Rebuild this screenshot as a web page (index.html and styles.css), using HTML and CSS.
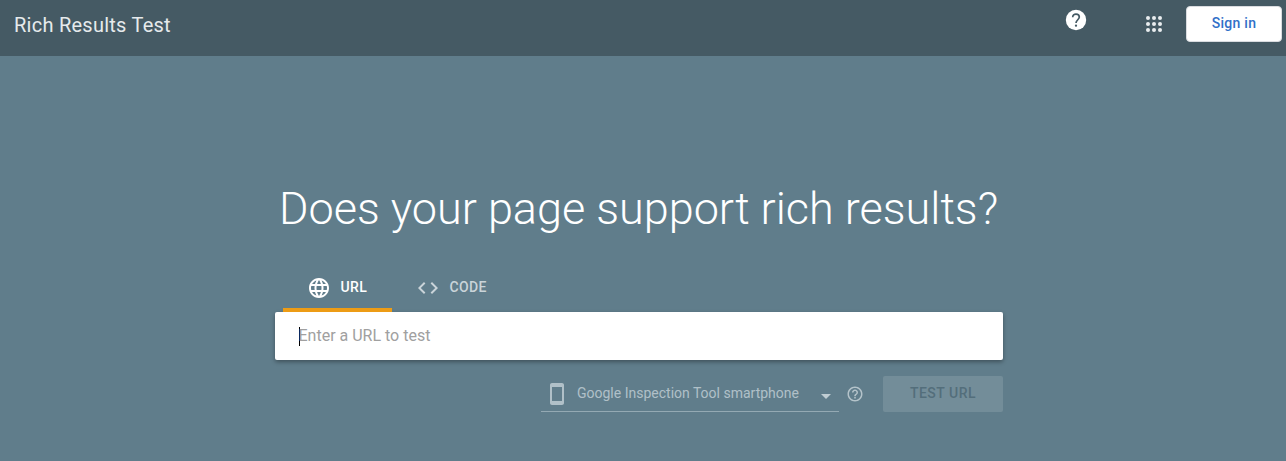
FILE: index.html
```html
<!DOCTYPE html>
<html lang="en">
<head>
<meta charset="utf-8">
<title>Rich Results Test</title>
<link rel="stylesheet" href="styles.css">
</head>
<body>
<header class="topbar">
  <div class="brand">Rich Results Test</div>
  <svg class="icon help" viewBox="0 0 24 24"><circle cx="12" cy="12" r="10.200"/><path class="help-mark" d="M8.700 9.300C8.700 7.300 10.100 6.100 12 6.100s3.300 1.200 3.300 3c0 2.500-3.300 2.900-3.300 6"/><circle class="help-dot" cx="12" cy="17.700" r="1.150"/></svg>
  <svg class="icon apps" viewBox="0 0 24 24"><circle cx="6" cy="6" r="2"/><circle cx="12" cy="6" r="2"/><circle cx="18" cy="6" r="2"/><circle cx="6" cy="12" r="2"/><circle cx="12" cy="12" r="2"/><circle cx="18" cy="12" r="2"/><circle cx="6" cy="18" r="2"/><circle cx="12" cy="18" r="2"/><circle cx="18" cy="18" r="2"/></svg>
  <button class="sign-in">Sign in</button>
</header>
<main class="hero">
  <h1 class="headline">Does your page support rich results?</h1>
  <nav class="tabs">
    <div class="tab tab-active">
      <svg class="icon" viewBox="0 0 24 24"><path d="M11.990 2C6.470 2 2 6.480 2 12s4.470 10 9.990 10C17.520 22 22 17.520 22 12S17.520 2 11.990 2zm6.930 6h-2.950c-.32-1.250-.78-2.450-1.380-3.560 1.840.63 3.370 1.910 4.330 3.560zM12 4.040c.83 1.200 1.480 2.530 1.910 3.960h-3.820c.43-1.430 1.080-2.760 1.910-3.960zM4.260 14C4.100 13.360 4 12.690 4 12s.1-1.360.26-2h3.380c-.08.66-.14 1.320-.14 2s.06 1.340.14 2H4.260zm.82 2h2.950c.32 1.250.78 2.450 1.380 3.560-1.840-.63-3.370-1.900-4.330-3.560zm2.950-8H5.080c.96-1.660 2.490-2.930 4.330-3.560C8.810 5.550 8.350 6.750 8.030 8zM12 19.960c-.83-1.200-1.480-2.530-1.910-3.960h3.820c-.43 1.430-1.080 2.760-1.910 3.960zM14.340 14H9.660c-.09-.66-.16-1.320-.16-2s.07-1.350.16-2h4.680c.09.65.16 1.320.16 2s-.07 1.340-.16 2zm.25 5.560c.6-1.110 1.060-2.310 1.380-3.560h2.950c-.96 1.650-2.490 2.930-4.330 3.560zM16.360 14c.08-.66.14-1.320.14-2s-.06-1.340-.14-2h3.380c.16.64.26 1.310.26 2s-.1 1.360-.26 2h-3.380z"/></svg>
      <span>URL</span>
    </div>
    <div class="tab">
      <svg class="icon" viewBox="0 0 24 24"><path d="M9.400 16.600L4.800 12l4.600-4.600L8 6l-6 6 6 6 1.400-1.400zm5.200 0l4.600-4.600-4.600-4.600L16 6l6 6-6 6-1.400-1.400z"/></svg>
      <span>CODE</span>
    </div>
  </nav>
  <div class="field"><span class="caret"></span><span class="placeholder">Enter a URL to test</span></div>
  <div class="actions">
    <div class="select">
      <svg class="icon phone" viewBox="0 0 24 24"><path d="M17 1.010L7 1c-1.100 0-2 .9-2 2v18c0 1.100.9 2 2 2h10c1.100 0 2-.9 2-2V3c0-1.100-.9-1.990-2-1.990zM17 19H7V5h10v14z"/></svg>
      <span class="agent">Google Inspection Tool smartphone</span>
      <span class="arrow"></span>
    </div>
    <svg class="hint" viewBox="0 0 24 24"><path d="M11 18h2v-2h-2v2zm1-16C6.480 2 2 6.480 2 12s4.480 10 10 10 10-4.480 10-10S17.520 2 12 2zm0 18c-4.410 0-8-3.590-8-8s3.590-8 8-8 8 3.590 8 8-3.590 8-8 8zm0-14c-2.210 0-4 1.790-4 4h2c0-1.100.9-2 2-2s2 .9 2 2c0 2-3 1.750-3 5h2c0-2.250 3-2.500 3-5 0-2.210-1.790-4-4-4z"/></svg>
    <button class="test" disabled>TEST URL</button>
  </div>
</main>
</body>
</html>
```
FILE: styles.css
```css
* { box-sizing: border-box; }
body {
  margin: 0;
  height: 461px;
  overflow: hidden;
  background: #607d8b;
  font-family: Roboto, "Liberation Sans", sans-serif;
}
.icon { width: 24px; height: 24px; fill: currentColor; flex: none; }
.topbar {
  display: flex;
  align-items: flex-start;
  height: 56px;
  padding: 6px 4px 0 14px;
  background: #455a64;
  color: #fff;
}
.brand {
  flex: 1;
  padding-top: 7px;
  font-size: 20px;
  line-height: 24px;
  letter-spacing: 0.25px;
  color: #e6eaec;
}
.help { margin: 2px 54px 0 0; }
.help-mark { fill: none; stroke: #455a64; stroke-width: 1.7; }
.help-dot { fill: #455a64; }
.apps { margin: 6px 20px 0 0; color: #e9edef; }
.sign-in {
  width: 96px;
  height: 36px;
  padding: 0 0 2px;
  border: 1px solid #dadce0;
  border-radius: 4px;
  background: #fff;
  color: #3170c8;
  font: 500 14px Roboto, sans-serif;
  letter-spacing: 0.25px;
}
.hero { width: 728px; margin-left: 275px; padding-top: 123px; }
.headline {
  margin: 0 0 0 4px;
  height: 85px;
  font-size: 45px;
  font-weight: 300;
  line-height: 60px;
  white-space: nowrap;
  color: #fff;
}
.tabs { display: flex; height: 48px; padding-left: 8px; }
.tab {
  display: flex;
  align-items: center;
  gap: 10px;
  height: 48px;
  padding: 4px 24px 0 23.5px;
  border-bottom: 4px solid transparent;
  font-size: 14px;
  font-weight: 500;
  letter-spacing: 0.35px;
  color: #cad4d9;
}
.tab span { padding-bottom: 2px; }
.tab-active { width: 109px; color: #fff; border-color: #ed9c15; }
.field {
  display: flex;
  align-items: center;
  height: 48px;
  padding-left: 24px;
  border-radius: 2px;
  background: #fff;
  box-shadow: 0 2px 4px rgba(0, 0, 0, 0.35);
}
.caret { width: 1px; height: 19px; margin-right: -1.5px; background: #000; }
.placeholder { padding-bottom: 2px; font-size: 16px; color: #a0a0a0; }
.actions { display: flex; height: 52px; padding: 16px 0 0 266px; }
.select {
  display: flex;
  align-items: center;
  width: 298px;
  height: 36px;
  padding-left: 4px;
  border-bottom: 1px solid #94a9b3;
  color: #b0c0c8;
}
.agent { margin-left: 8px; padding-bottom: 1px; font-size: 14px; }
.arrow {
  margin: 5px 8px 0 auto;
  border: 5px solid transparent;
  border-top-color: #c0cdd3;
  border-bottom: 0;
}
.hint { width: 18px; height: 18px; margin: 9px 19px 0 7px; fill: #b4c3ca; }
.test {
  width: 120px;
  height: 36px;
  padding: 0 0 2px;
  border: 0;
  border-radius: 2px;
  background: #738d99;
  color: #536e7b;
  font: 500 14px Roboto, sans-serif;
  letter-spacing: 0.5px;
}
```
